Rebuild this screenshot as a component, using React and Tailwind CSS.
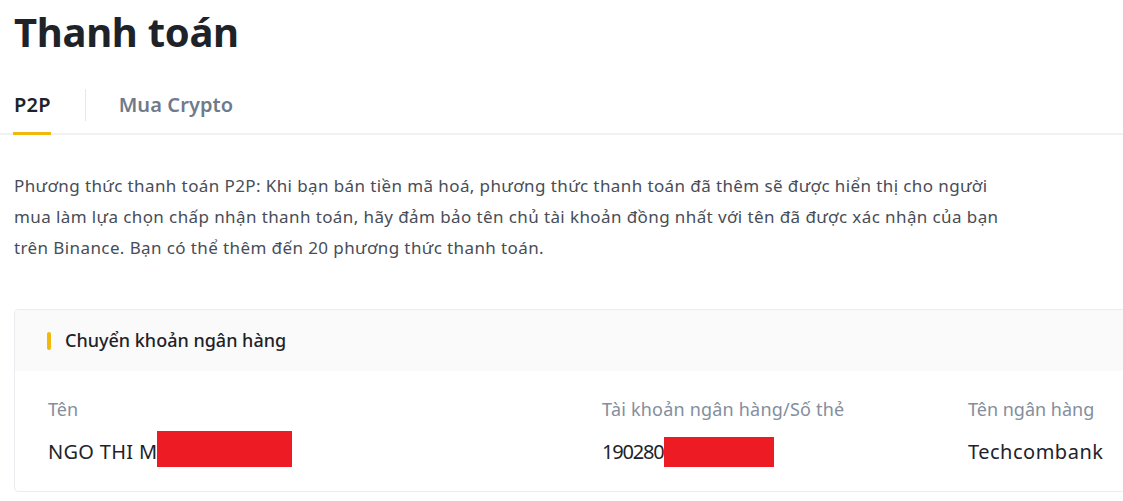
import React from "react";

export default function App() {
  return (
    <div className="w-[1123px] h-[501px] overflow-hidden bg-white" style={{ fontFamily: '"Noto Sans", "Open Sans", sans-serif' }}>
      <div className="w-[1150px] pl-[14px]">
        <h1 className="text-[40px] leading-[48px] font-bold text-[#1e2329] pt-[8px] tracking-[-0.3px]">Thanh toán</h1>
        <div className="mt-[21px] flex items-stretch border-b-2 border-[#f0f1f5] h-[58px] -ml-[14px] pl-[14px]">
          <div className="relative flex items-center">
            <span className="text-[20px] font-semibold text-[#1e2329] tracking-[0.2px]">P2P</span>
            <div className="absolute left-[-1px] right-0 bottom-[-2px] h-[3px] bg-[#f0b90b]"></div>
          </div>
          <div className="w-px h-[32px] bg-[#e6e8ea] ml-[34px] self-center"></div>
          <div className="flex items-center ml-[33px]">
            <span className="text-[20px] font-semibold text-[#707a8a] tracking-[0.1px]">Mua Crypto</span>
          </div>
        </div>
        <p className="mt-[35px] text-[17px] leading-[31px] text-[#474d57] tracking-[0.4px]">
          Phương thức thanh toán P2P: Khi bạn bán tiền mã hoá, phương thức thanh toán đã thêm sẽ được hiển thị cho người
          <br />
          mua làm lựa chọn chấp nhận thanh toán, hãy đảm bảo tên chủ tài khoản đồng nhất với tên đã được xác nhận của bạn
          <br />
          trên Binance. Bạn có thể thêm đến 20 phương thức thanh toán.
        </p>
        <div className="mt-[46px] border border-[#eaecef] rounded-[4px] overflow-hidden">
          <div className="h-[61px] bg-[#fafafa] flex items-center pl-[32px]">
            <div className="w-[4px] h-[18px] rounded-[2px] bg-[#f0b90b]"></div>
            <span className="ml-[14px] text-[18px] font-medium text-[#1e2329]">Chuyển khoản ngân hàng</span>
          </div>
          <div className="flex pl-[33px] pt-[26px] h-[120px]">
            <div className="w-[554px]">
              <div className="text-[18px] leading-[24px] text-[#848e9c]">Tên</div>
              <div className="mt-[10px] flex items-end text-[20px] text-[#1e2329] h-[36px]">
                <span className="leading-[30px] tracking-[0.3px]">NGO THI M</span>
                <span className="inline-block w-[135px] h-[36px] bg-[#ed1c24]"></span>
              </div>
            </div>
            <div className="w-[366px]">
              <div className="text-[18px] leading-[24px] text-[#848e9c] tracking-[0.2px]">Tài khoản ngân hàng/Số thẻ</div>
              <div className="mt-[10px] flex items-end text-[20px] text-[#1e2329] h-[36px]">
                <span className="leading-[30px] tracking-[-1.2px]">190280</span>
                <span className="inline-block w-[110px] h-[30px] bg-[#ed1c24] ml-[1px]"></span>
              </div>
            </div>
            <div>
              <div className="text-[18px] leading-[24px] text-[#848e9c]">Tên ngân hàng</div>
              <div className="mt-[10px] flex items-end h-[36px]">
                <span className="text-[20px] leading-[30px] text-[#1e2329] tracking-[0.5px]">Techcombank</span>
              </div>
            </div>
          </div>
        </div>
      </div>
    </div>
  );
}
